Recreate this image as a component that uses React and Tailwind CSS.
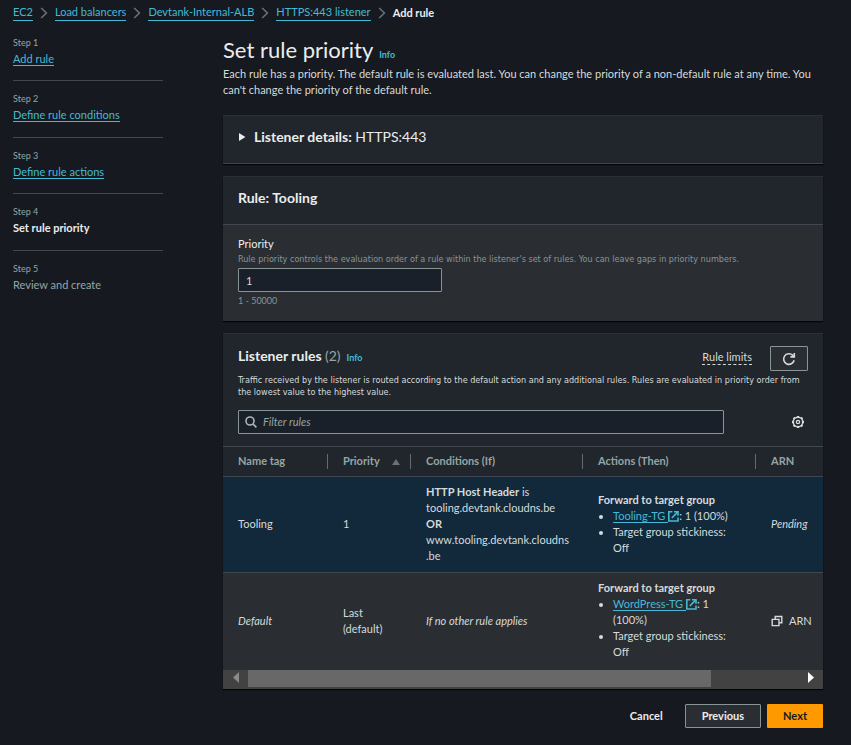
import React from "react";

const linkClass = "border-b border-[#44b9d6] text-[#44b9d6]";

const crumbs = ["EC2", "Load balancers", "Devtank-Internal-ALB", "HTTPS:443 listener"];

const steps = [
  { label: "Step 1", title: "Add rule", state: "link" },
  { label: "Step 2", title: "Define rule conditions", state: "link" },
  { label: "Step 3", title: "Define rule actions", state: "link" },
  { label: "Step 4", title: "Set rule priority", state: "current" },
  { label: "Step 5", title: "Review and create", state: "todo" },
];

function ChevronIcon() {
  return (
    <svg width="8" height="12" viewBox="0 0 8 12" fill="none" stroke="#687078" strokeWidth="1.6" aria-hidden="true">
      <path d="M1.2 1L6.4 6L1.2 11" />
    </svg>
  );
}

function ExternalIcon() {
  return (
    <svg className="inline-block align-[-2px]" width="11" height="12" viewBox="0 0 11 12" fill="none" stroke="#44b9d6" strokeWidth="1.6" aria-hidden="true">
      <path d="M4.4 1.7H0.8V11H10V7.4" />
      <path d="M6 1.7H10V5.8" />
      <path d="M9.8 1.9L3.8 8" />
    </svg>
  );
}

function RefreshIcon() {
  return (
    <svg width="14" height="14" viewBox="0 0 14 14" fill="none" stroke="#d5dbdb" strokeWidth="1.6" aria-hidden="true">
      <path d="M12.1 8.3A5.3 5.3 0 1 1 10.6 3.2L12.2 4.8" />
      <path d="M12.3 1V4.9H8.4" />
    </svg>
  );
}

function SearchIcon() {
  return (
    <svg width="12" height="12" viewBox="0 0 12 12" fill="none" stroke="#aab7b8" strokeWidth="1.6" aria-hidden="true">
      <circle cx="5" cy="5" r="4" />
      <path d="M8 8L11.4 11.4" />
    </svg>
  );
}

function GearIcon() {
  return (
    <svg width="14" height="14" viewBox="0 0 14 14" fill="none" stroke="#d5dbdb" aria-hidden="true">
      <circle cx="7" cy="7" r="4.7" strokeWidth="1.5" />
      <path
        strokeWidth="2.4"
        d="M7 1V2.4M7 11.6V13M1 7H2.4M11.6 7H13M2.6 2.6L3.7 3.7M10.3 10.3L11.4 11.4M2.6 11.4L3.7 10.3M10.3 3.7L11.4 2.6"
      />
      <circle cx="7" cy="7" r="1.6" strokeWidth="1.4" />
    </svg>
  );
}

function CopyIcon() {
  return (
    <svg width="12" height="12" viewBox="0 0 12 12" fill="none" stroke="#d5dbdb" strokeWidth="1.4" aria-hidden="true">
      <path d="M4.2 4V1.5H10.8V7.8H8.2" />
      <path d="M1.2 4.4H8V10.6H1.2Z" />
    </svg>
  );
}

function Card({ children, className = "" }) {
  return (
    <section className={`border-t border-[#2c3036] bg-[#21252c] shadow-[0_1px_1px_rgba(0,0,0,0.8)] ${className}`}>
      {children}
    </section>
  );
}

function HeadCell({ children, divided = true }) {
  return (
    <th scope="col" className="py-[7px] text-left leading-[14px] font-bold">
      <div className={`flex h-[15px] justify-between pl-[15px] ${divided ? "border-r border-[#5f6b7a]" : ""}`}>
        {children}
      </div>
    </th>
  );
}

function TargetGroup({ name, weight }) {
  return (
    <>
      <strong>Forward to target group</strong>
      <ul className="list-disc pl-[15px]">
        <li>
          <a href="#" className={linkClass}>{name} </a>
          <ExternalIcon />: {weight}
        </li>
        <li>Target group stickiness: Off</li>
      </ul>
    </>
  );
}

export default function App() {
  return (
    <div className="min-h-screen bg-[#16191f] pr-7 pb-4 pl-[13px] font-['Lato','Noto_Sans',sans-serif] text-[11px] leading-4 text-[#d5dbdb]">
      <nav aria-label="Breadcrumbs" className="pt-1">
        <ol className="flex items-center">
          {crumbs.map((c) => (
            <li key={c} className="flex items-center">
              <a href="#" className={linkClass}>{c}</a>
              <span className="px-[7px]"><ChevronIcon /></span>
            </li>
          ))}
          <li className="font-bold text-[#eaeded]">Add rule</li>
        </ol>
      </nav>

      <div className="flex items-start gap-[60px] pt-4">
        <nav aria-label="Steps" className="w-[150px] shrink-0">
          <ol>
            {steps.map((s, i) => (
              <li key={s.label} className={i < 4 ? "mb-3 h-[44px] border-b border-[#414750] even:h-[45px]" : ""}>
                <div className="text-[9px] leading-3 text-[#95a5a6]">{s.label}</div>
                <div className="pt-[2px]">
                  {s.state === "link" && <a href="#" className={linkClass}>{s.title}</a>}
                  {s.state === "current" && <span className="font-bold text-[#eaeded]" aria-current="step">{s.title}</span>}
                  {s.state === "todo" && <span className="text-[#95a5a6]">{s.title}</span>}
                </div>
              </li>
            ))}
          </ol>
        </nav>

        <main className="min-w-0 flex-1">
          <header>
            <div className="flex items-baseline gap-[6px] pb-[3px]">
              <h1 className="text-[22px] leading-[25px] text-[#eaeded]">Set rule priority</h1>
              <a href="#" className="text-[9px] font-bold text-[#44b9d6]">Info</a>
            </div>
            <p>
              Each rule has a priority. The default rule is evaluated last. You can change the priority of a non-default rule at any time. You can't change the priority of the default rule.
            </p>
          </header>

          <Card className="mt-[17px] border-b border-b-[#414750] px-[15px] pt-[10px] pb-4">
            <button type="button" aria-expanded="false" className="flex h-[21px] items-center gap-2 text-sm text-[#eaeded]">
              <svg width="8" height="8" viewBox="0 0 8 8" fill="#eaeded" aria-hidden="true"><path d="M1 0L7.4 4L1 8Z" /></svg>
              <span><strong>Listener details:</strong> HTTPS:443</span>
            </button>
          </Card>

          <Card className="mt-3">
            <h2 className="px-[15px] pt-[10px] pb-4 text-sm leading-[21px] font-bold text-[#eaeded]">Rule: Tooling</h2>
            <div className="border-t border-[#414750] bg-[#2a2e33] px-[15px] pt-[11px] pb-[13px]">
              <label htmlFor="priority" className="block text-[#eaeded]">Priority</label>
              <p className="font-['DejaVu_Sans_Condensed','Lato',sans-serif] text-[9px] leading-[14px] text-[#879596]">
                Rule priority controls the evaluation order of a rule within the listener's set of rules. You can leave gaps in priority numbers.
              </p>
              <input id="priority" type="text" defaultValue="1" className="mt-[2px] block h-6 w-[204px] rounded-[1px] border border-[#879596] bg-[#1a2029] px-[7px] text-[#d5dbdb]" />
              <p className="pt-[2px] text-[9px] leading-[14px] text-[#879596]">1 - 50000</p>
            </div>
          </Card>

          <Card className="mt-3">
            <div className="px-[15px] pt-3 pb-3">
              <div className="flex items-start justify-between">
                <div className="flex items-baseline gap-[6px]">
                  <h2 className="text-sm leading-5 font-bold text-[#eaeded]">
                    Listener rules <span className="font-normal text-[#95a5a6]">(2)</span>
                  </h2>
                  <a href="#" className="text-[9px] font-bold text-[#44b9d6]">Info</a>
                </div>
                <div className="flex items-start gap-[18px]">
                  <a href="#" className="mt-[3px] border-b border-dashed border-[#d5dbdb] leading-[15px]">Rule limits</a>
                  <button type="button" aria-label="Refresh" className="flex h-[25px] w-[38px] items-center justify-center rounded-[1px] border border-[#879596] bg-[#2a2e33]">
                    <RefreshIcon />
                  </button>
                </div>
              </div>
              <p className="pt-[3px] font-['DejaVu_Sans_Condensed','Lato',sans-serif] text-[9px] leading-3">
                Traffic received by the listener is routed according to the default action and any additional rules. Rules are evaluated in priority order from the lowest value to the highest value.
              </p>
              <div className="mt-3 flex items-center justify-between gap-[67px]">
                <label className="flex h-6 flex-1 items-center gap-[6px] rounded-[1px] border border-[#879596] bg-[#1a2029] px-[6px]">
                  <SearchIcon />
                  <input type="search" aria-label="Filter rules" placeholder="Filter rules" className="min-w-0 flex-1 bg-transparent outline-none placeholder:text-[#95a5a6] placeholder:italic" />
                </label>
                <button type="button" aria-label="Preferences" className="mr-[3px]"><GearIcon /></button>
              </div>
            </div>

            <table className="w-full table-fixed border-collapse text-left">
              <colgroup>
                <col className="w-[105px]" />
                <col className="w-[83px]" />
                <col className="w-[172px]" />
                <col className="w-[173px]" />
                <col />
              </colgroup>
              <thead>
                <tr className="border-y border-[#414750] text-[#95a5a6]">
                  <HeadCell>Name tag</HeadCell>
                  <HeadCell>
                    Priority
                    <svg className="mr-[10px] self-center" width="8" height="6" viewBox="0 0 8 6" fill="#687078" aria-hidden="true"><path d="M4 0L8 6H0Z" /></svg>
                  </HeadCell>
                  <HeadCell>Conditions (If)</HeadCell>
                  <HeadCell>Actions (Then)</HeadCell>
                  <HeadCell divided={false}>ARN</HeadCell>
                </tr>
              </thead>
              <tbody>
                <tr className="border-b border-[#414750] bg-[#12293b]">
                  <td className="px-[15px] pb-[2px]">Tooling</td>
                  <td className="px-[15px] pb-[2px]">1</td>
                  <td className="pt-[7px] pr-2 pb-2 pl-[15px]">
                    <strong>HTTP Host Header</strong> is<br />
                    tooling.devtank.cloudns.be<br />
                    <strong>OR</strong><br />
                    www.tooling.devtank.cloudns<wbr />.be
                  </td>
                  <td className="px-[15px] pb-[2px]"><TargetGroup name="Tooling-TG" weight="1 (100%)" /></td>
                  <td className="pb-[2px] pl-[15px]"><em>Pending</em></td>
                </tr>
                <tr className="bg-[#2a2e33]">
                  <td className="px-[15px] pb-[2px]"><em>Default</em></td>
                  <td className="px-[15px] pb-[2px]">Last (default)</td>
                  <td className="px-[15px] pb-[2px]"><em>If no other rule applies</em></td>
                  <td className="px-[15px] pt-[7px] pb-[10px]"><TargetGroup name="WordPress-TG" weight="1 (100%)" /></td>
                  <td className="pb-[2px] pl-[15px]">
                    <button type="button" className="flex items-center gap-[6px]"><CopyIcon />ARN</button>
                  </td>
                </tr>
              </tbody>
            </table>

            <div className="flex h-[19px] items-start bg-[#424242]">
              <button type="button" aria-label="Scroll left" className="flex h-[14px] w-[25px] items-center justify-center">
                <svg width="6" height="11" viewBox="0 0 6 11" fill="#8a8a8a" aria-hidden="true"><path d="M6 0V11L0 5.5Z" /></svg>
              </button>
              <div className="h-[17px] flex-1">
                <div className="h-full w-[84%] bg-[#686868]" />
              </div>
              <button type="button" aria-label="Scroll right" className="flex h-[14px] w-[24px] items-center justify-center">
                <svg width="6" height="11" viewBox="0 0 6 11" fill="#ffffff" aria-hidden="true"><path d="M0 0V11L6 5.5Z" /></svg>
              </button>
            </div>
          </Card>

          <div className="mt-[15px] flex justify-end gap-[6px] font-bold">
            <button type="button" className="h-6 px-4 text-[#eaeded]">Cancel</button>
            <button type="button" className="h-6 rounded-[1px] border border-[#879596] bg-[#2a2e33] px-4 text-[#eaeded]">Previous</button>
            <button type="button" className="h-6 rounded-[1px] bg-[#ff9900] px-4 text-[#16191f]">Next</button>
          </div>
        </main>
      </div>
    </div>
  );
}
